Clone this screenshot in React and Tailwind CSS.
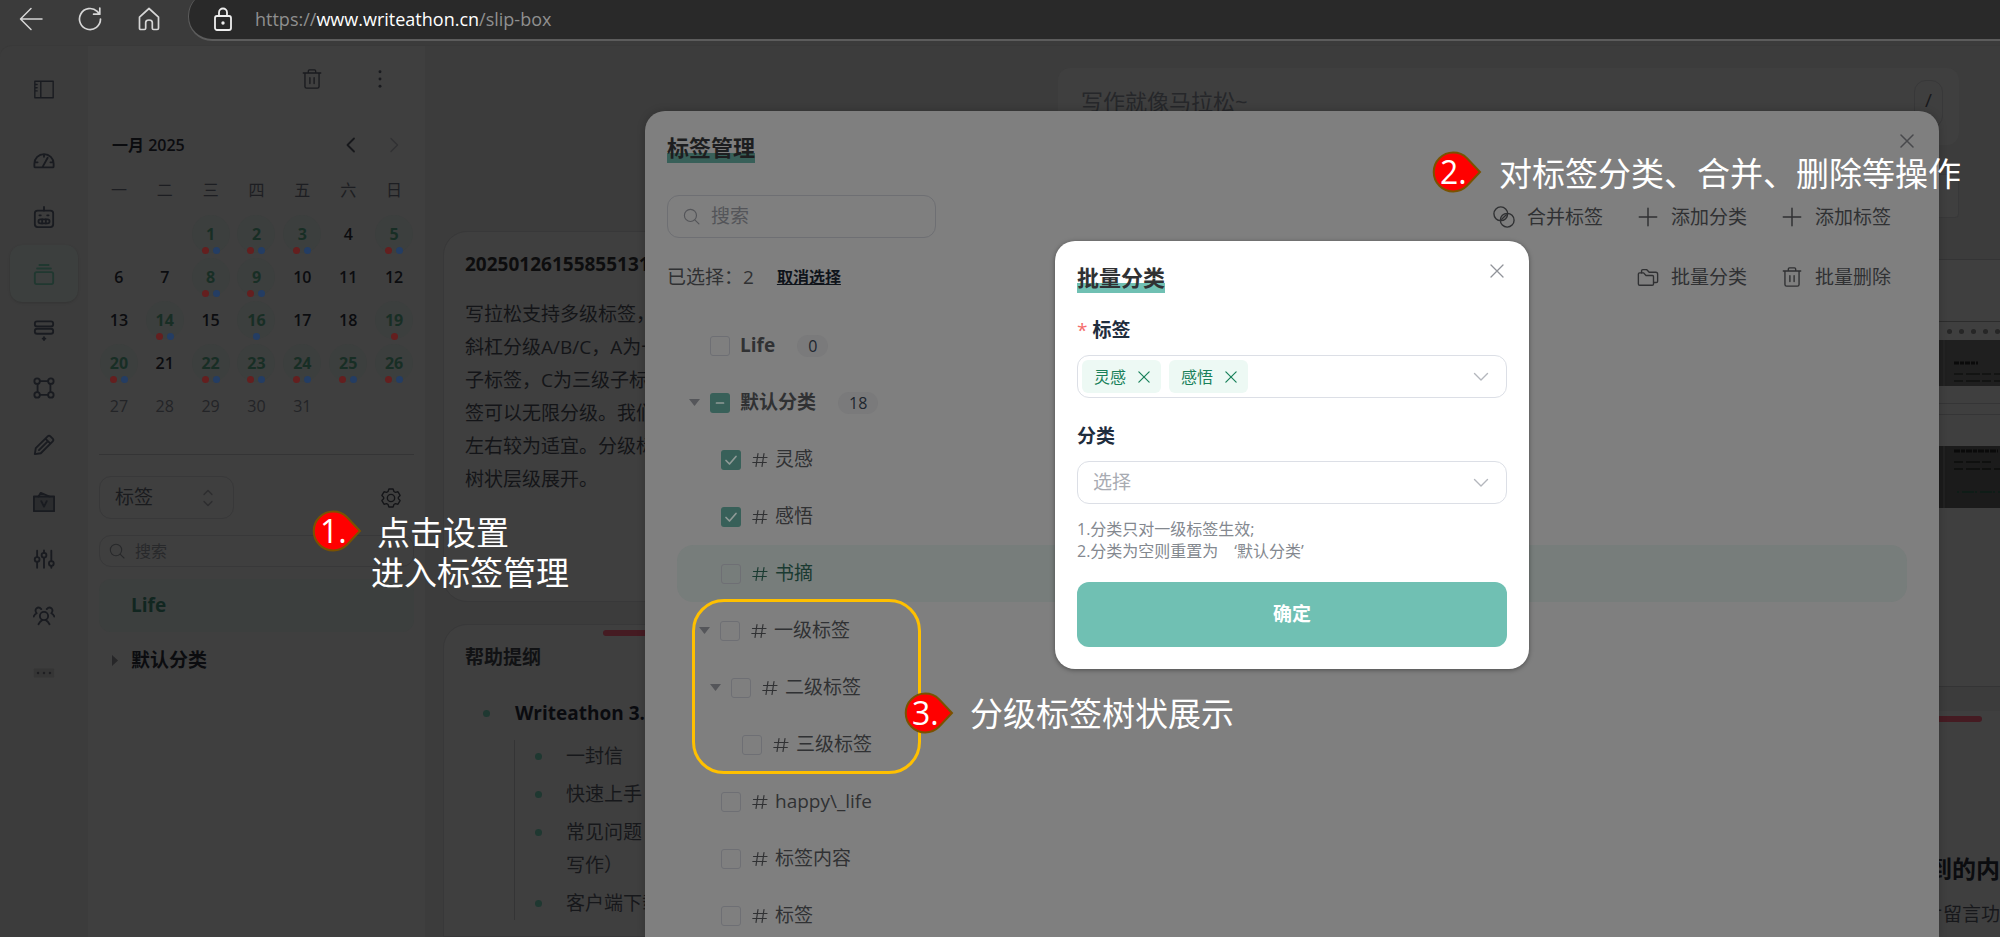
import React from "react";

function Svg({ size = 22, w = 1.5, children, className = "", vb = "0 0 24 24" }) {
  return (
    <svg
      width={size}
      height={size}
      viewBox={vb}
      fill="none"
      stroke="currentColor"
      strokeWidth={w}
      strokeLinecap="round"
      strokeLinejoin="round"
      className={"shrink-0 " + className}
      aria-hidden="true"
    >
      {children}
    </svg>
  );
}

const Trash = ({ size = 22 }) => (
  <Svg size={size}>
    <path d="M2.5 5.5h19M8 5.5V3.2q0-1.2 1.2-1.2h5.6q1.2 0 1.2 1.2v2.3M4.3 5.5v14.7q0 1.8 1.8 1.8h11.8q1.8 0 1.8-1.8V5.5M9.7 10.5v6.5M14.3 10.5v6.5" />
  </Svg>
);
const Close = ({ size = 14, w = 1.5 }) => (
  <Svg size={size} w={w} vb="0 0 14 14">
    <path d="M1 1l12 12M13 1L1 13" />
  </Svg>
);
const Search = ({ size = 17 }) => (
  <Svg size={size} w={1.6}>
    <circle cx="10.5" cy="10.5" r="8.5" />
    <path d="M17 17l5.5 5.5" />
  </Svg>
);
const Down = ({ className = "" }) => (
  <Svg size={16} w={1.4} vb="0 0 16 16" className={className}>
    <path d="M1.5 4.5L8 11l6.5-6.5" />
  </Svg>
);
const Plus = () => (
  <Svg size={22} w={1.6}>
    <path d="M12 2.5v19M2.5 12h19" />
  </Svg>
);
const Merge = () => (
  <Svg size={22}>
    <circle cx="8.5" cy="8.5" r="7.5" />
    <circle cx="15.5" cy="15.5" r="7.5" />
    <path d="M9.5 14.5l5-5" />
  </Svg>
);
const Folders = () => (
  <Svg size={22}>
    <path d="M1.5 19.5V8.8q0-1.3 1.3-1.3h4.4l2.6 2.8h7q1.2 0 1.2 1.2v8q0 1.5-1.5 1.5H3q-1.5 0-1.5-1.5z" />
    <path d="M5 7.5V5.3Q5 4 6.3 4h4.4l2.6 2.8h7.2q2 0 2 2v7.7q0 1.5-1.5 1.5h-2.5" />
  </Svg>
);

const navIcons = [
  {
    name: "仪表盘",
    art: (
      <Svg w={2}>
        <path d="M1.5 19v-3a10.5 10.5 0 0 1 21 0v3q0 1-1 1h-19q-1 0-1-1zM12 6v2.5M2 14.5h3M22 14.5h-3M10.5 19.5L16 9.5" />
      </Svg>
    ),
  },
  {
    name: "助手",
    art: (
      <Svg w={2}>
        <rect x="2" y="5" width="20" height="18" rx="3" />
        <path d="M12 1v4M7 10.2h1.5M15.5 10.2H17" />
        <rect x="6" y="14.5" width="12" height="4.5" rx="2" />
        <path d="M10 14.5V19M14 14.5V19" />
      </Svg>
    ),
  },
  {
    name: "卡片盒",
    active: true,
    art: (
      <Svg w={2}>
        <rect x="2" y="10" width="20" height="13" rx="2" />
        <path d="M4.5 6h15M7 2.2h10" />
      </Svg>
    ),
  },
  {
    name: "列表",
    art: (
      <Svg w={2}>
        <rect x="2" y="1.5" width="20" height="5.5" rx="2.5" />
        <rect x="2" y="9.5" width="20" height="5.5" rx="2.5" />
        <path d="M12 18.8v3M10.5 20.3h3" />
      </Svg>
    ),
  },
  {
    name: "白板",
    art: (
      <Svg w={2}>
        <circle cx="4.5" cy="4.5" r="3" />
        <circle cx="19.5" cy="4.5" r="3" />
        <circle cx="4.5" cy="19.5" r="3" />
        <circle cx="19.5" cy="19.5" r="3" />
        <path d="M7.5 4.5h9M7.5 19.5h9M5 7.5v9M19 7.5v9" />
      </Svg>
    ),
  },
  {
    name: "写作",
    art: (
      <Svg w={2}>
        <path d="M2 22l1-6.5L16 2.5q1.5-1.5 3 0l2.5 2.5q1.5 1.5 0 3L8.5 21zM13.5 5l5.5 5.5M6.5 17.5l9-9" />
      </Svg>
    ),
  },
  {
    name: "素材",
    art: (
      <Svg w={2}>
        <rect x="1" y="6" width="22" height="16" fill="#2b2c2e" />
        <path d="M6 6l2.5-4L18 6M9 11l3 6 3-6" />
      </Svg>
    ),
  },
  {
    name: "设置",
    art: (
      <Svg w={2}>
        <path d="M4.5 3v6.5M4.5 15v6.5M12 2.5v3M12 11v10.5M20 3v11.5M20 20v1.5" />
        <circle cx="4.5" cy="12.5" r="2.6" />
        <circle cx="12" cy="8" r="2.6" />
        <circle cx="20" cy="17" r="2.6" />
      </Svg>
    ),
  },
  {
    name: "团队",
    art: (
      <Svg w={2}>
        <circle cx="12" cy="12" r="4.5" />
        <path d="M6 21q1.5-3 4-4.5M18 21q-1.5-3-4-4.5M9 4.5Q6.5 1.5 4 3.5q-2.5 2.5 0 5.5-2 1-3.3 3.5M15 4.5q2.5-3 5-1 2.5 2.5 0 5.5 2 1 3.3 3.5" />
      </Svg>
    ),
  },
  {
    name: "更多",
    art: (
      <Svg w={1}>
        <rect x="1" y="7" width="22" height="10" rx="1" fill="#353535" stroke="none" />
        <g fill="#1f1f22" stroke="none">
          <circle cx="5.5" cy="12" r="1.3" />
          <circle cx="12" cy="12" r="1.3" />
          <circle cx="18.5" cy="12" r="1.3" />
        </g>
      </Svg>
    ),
  },
];

function BrowserBar() {
  return (
    <header className="flex h-[45px] shrink-0 items-start bg-[#3b3b3b] text-[#d6d6d6]">
      <div className="flex h-[38px] items-center gap-[35px] pr-[27px] pl-[19px]">
        <button type="button" aria-label="后退">
          <Svg size={24}>
            <path d="M23 12H2M12 1.5L1.5 12 12 22.5" />
          </Svg>
        </button>
        <button type="button" aria-label="刷新">
          <Svg size={24} w={1.7}>
            <path d="M22.5 12a10.5 10.5 0 1 1-3.3-7.6L21.5 7M21.8 1v6.2h-6.2" />
          </Svg>
        </button>
        <button type="button" aria-label="主页">
          <Svg size={24} w={1.7}>
            <path d="M2.5 10.2L12 1.5l9.5 8.7v11q0 1.3-1.3 1.3h-3.6q-1.3 0-1.3-1.3v-5.7q0-2.5-3.3-2.5t-3.3 2.5v5.7q0 1.3-1.3 1.3H3.8q-1.3 0-1.3-1.3z" />
          </Svg>
        </button>
      </div>
      <div className="-mt-2 flex h-[49px] flex-1 items-center gap-5 rounded-l-3xl border-b-2 border-l border-[#5c5c5c] bg-[#292929] pt-[7px] pl-[22px]">
        <Svg size={24} w={1.8} className="text-[#eeeeee]">
          <rect x="4" y="9" width="16" height="14" rx="2" />
          <path d="M8 9V5.5a4 4 0 0 1 8 0V9" />
          <circle cx="12" cy="16" r="0.8" fill="currentColor" />
        </Svg>
        <p className="text-[18px] whitespace-nowrap text-[#8f8f8f]">
          https://<span className="font-medium text-white">www.writeathon.cn</span>/slip-box
        </p>
      </div>
    </header>
  );
}

function SideNav() {
  return (
    <nav className="flex w-[88px] shrink-0 flex-col items-center bg-[#3c3c3c] text-[#191b20]">
      <button type="button" aria-label="侧栏" className="mt-[33px] mb-[30px] h-[22px]">
        <Svg size={22} w={1.5}>
          <path d="M2 2.5h20v18H2zM8.5 2.5v18M2 6h2.5M2 9.5h2.5M2 13h2.5" />
        </Svg>
      </button>
      {navIcons.map((it) => (
        <button
          key={it.name}
          type="button"
          aria-label={it.name}
          className={
            it.active
              ? "flex h-[57px] w-[68px] items-center justify-center rounded-xl bg-[#3c3f3e] text-[#203830] shadow-sm"
              : "flex h-[57px] w-[68px] items-center justify-center"
          }
        >
          {it.art}
        </button>
      ))}
    </nav>
  );
}

const RB = "rb";
const marks = {
  1: RB, 2: RB, 3: RB, 5: RB, 8: RB, 9: RB, 14: RB, 16: "b", 19: "r",
  20: RB, 22: RB, 23: RB, 24: RB, 25: RB, 26: RB,
};

function Day({ n }) {
  const m = marks[n];
  return (
    <div className="relative flex h-[43px] items-center justify-center text-[16px]">
      <button
        type="button"
        className={
          m
            ? "h-[38px] w-[38px] rounded-full bg-[#3c3f3e] font-bold text-[#182e25]"
            : n > 26
              ? "h-[38px] w-[38px] text-[#232427]"
              : "h-[38px] w-[38px] font-semibold text-[#0b0c0f]"
        }
      >
        {n}
      </button>
      {m && (
        <span className="absolute inset-x-0 bottom-px flex justify-center gap-1">
          {m.includes("r") && <i className="size-[7px] rounded-full bg-[#641f1f]" />}
          {m.includes("b") && <i className="size-[7px] rounded-full bg-[#243d63]" />}
        </span>
      )}
    </div>
  );
}

function Calendar() {
  return (
    <section className="px-2">
      <div className="flex h-6 items-center pr-[15px] pl-4 text-[16px]">
        <h2 className="flex-1 font-semibold text-[#0b0c0f]">一月 2025</h2>
        <button type="button" aria-label="上个月" className="mr-[27px] text-[#17181b]">
          <Svg size={16} w={1.8} vb="0 0 16 16"><path d="M11 1.5L4.5 8l6.5 6.5" /></Svg>
        </button>
        <button type="button" aria-label="下个月" className="text-[#323234]">
          <Svg size={16} w={1.5} vb="0 0 16 16"><path d="M5 1.5L11.5 8 5 14.5" /></Svg>
        </button>
      </div>
      <div className="mt-[21px] grid grid-cols-7 text-center text-[16px] leading-[24px] text-[#1d1e22]">
        {["一", "二", "三", "四", "五", "六", "日"].map((d) => (
          <span key={d}>{d}</span>
        ))}
      </div>
      <div className="mt-[10px] grid grid-cols-7">
        <span />
        <span />
        {Array.from({ length: 31 }, (_, i) => (
          <Day key={i} n={i + 1} />
        ))}
      </div>
    </section>
  );
}

function MiddlePanel() {
  return (
    <aside className="flex w-[337px] shrink-0 flex-col bg-[#3f3f3f]">
      <div className="mt-[21px] flex h-6 items-center justify-end gap-[46px] pr-[34px] text-[#1a1b1f]">
        <button type="button" aria-label="回收站"><Trash /></button>
        <button type="button" aria-label="更多操作">
          <Svg size={22}>
            <g fill="currentColor" stroke="none">
              <circle cx="12" cy="4" r="1.6" />
              <circle cx="12" cy="12" r="1.6" />
              <circle cx="12" cy="20" r="1.6" />
            </g>
          </Svg>
        </button>
      </div>
      <div className="mt-[42px]"><Calendar /></div>
      <div className="mr-[11px] ml-[11px] mt-[27px] border-t border-[#343435] pt-[21px]">
        <div className="flex items-center justify-between pr-[12px]">
          <div className="grid h-[43px] w-[135px] items-center rounded-xl border border-[#383839]">
            <select
              aria-label="视图"
              className="col-start-1 row-start-1 h-full w-full appearance-none pl-[15px] text-[19px] text-[#1a1b1e] outline-none"
            >
              <option>标签</option>
            </select>
            <Svg size={18} w={1.2} vb="0 0 18 18" className="pointer-events-none col-start-1 row-start-1 mr-4 justify-self-end text-[#2c2c2e]">
              <path d="M5 5.5L9 1.5l4 4M5 12.5l4 4 4-4" />
            </Svg>
          </div>
          <button type="button" aria-label="标签设置" className="text-[#141518]">
            <Svg size={22}>
              <path d="M9.7 2.2h4.6l.9 2.7 1.6.9 2.800-.6 2.300 4-1.900 2.100v1.400l1.900 2.100-2.300 4-2.800-.6-1.600.9-.9 2.700H9.700l-.9-2.700-1.600-.9-2.800.6-2.300-4L4 12.700v-1.400L2.100 9.200l2.300-4 2.800.6 1.600-.9z" />
              <circle cx="12" cy="12" r="4" />
            </Svg>
          </button>
        </div>
        <label className="mt-4 flex h-8 items-center gap-2 rounded-xl border border-[#383839] px-[9px] text-[#28292b]">
          <Search size={16} />
          <input
            type="text"
            placeholder="搜索"
            aria-label="搜索标签"
            className="min-w-0 flex-1 bg-transparent pl-[2px] text-[16px] outline-none placeholder:text-[#28292b]"
          />
        </label>
        <ul className="mt-3 text-[19px] font-bold">
          <li className="flex h-[53px] items-center rounded-xl bg-[#3c3f3e] pl-8 text-[#112620]">Life</li>
          <li className="flex h-[57px] items-center gap-[13px] pl-[13px] text-[#0b0c0f]">
            <svg width="6" height="11" viewBox="0 0 6 11" fill="#262628" aria-hidden="true"><path d="M0 0l6 5.5L0 11z" /></svg>
            默认分类
          </li>
        </ul>
      </div>
    </aside>
  );
}

const cardLines = ["写拉松支持多级标签，", "斜杠分级A/B/C，A为一", "子标签，C为三级子标签", "签可以无限分级。我们", "左右较为适宜。分级标签", "树状层级展开。"];

function Bullet() {
  return <i className="size-[7px] shrink-0 rounded-full bg-[#1f3831]" />;
}

function ShotHeader() {
  return (
    <div className="flex w-full justify-end bg-[#1f1f1f]">
      <svg width="61" height="46" viewBox="0 0 61 46" aria-hidden="true">
        <path d="M5 0v46" stroke="#292929" />
        <path d="M15 23h24" stroke="#0a0a0a" strokeWidth="3" strokeDasharray="5 1 4 1" />
        <path d="M15 34h46M15 41h46" stroke="#131413" strokeWidth="2" strokeDasharray="9 3 14 2" />
      </svg>
    </div>
  );
}

function ShotBody() {
  return (
    <div className="flex w-full justify-end bg-[#1b1b1b]">
      <svg width="61" height="62" viewBox="0 0 61 62" aria-hidden="true">
        <path d="M5 0v62" stroke="#292929" />
        <path d="M15 5h44" stroke="#0a0a0a" strokeWidth="3" strokeDasharray="6 1 4 1" />
        <path d="M15 16h40M15 23h46" stroke="#0f100f" strokeWidth="2" strokeDasharray="9 3 14 2" />
        <path d="M18 46h43" stroke="#0f1c17" strokeWidth="2" strokeDasharray="2 3 12 1" />
      </svg>
    </div>
  );
}

function Content() {
  return (
    <main className="flex min-w-0 flex-1 flex-col bg-[#3c3c3c] pt-[22px]">
      <div className="mr-[41px] ml-auto flex h-[77px] w-[901px] shrink-0 items-start justify-between rounded-xl bg-[#3f3f3f] px-4 pt-4">
        <p className="pl-[7px] text-[22px] leading-[34px] text-[#26272a]">写作就像马拉松~</p>
        <kbd className="-mt-1 flex h-12 w-[29px] items-center justify-center rounded-xl border border-[#383839] pb-2 font-['Open_Sans'] text-[19px] text-[#17181b]">/</kbd>
      </div>
      <div className="mt-[29px] mr-[41px] ml-auto h-11 w-[901px] shrink-0 rounded border border-[#383839] bg-[#3f3f3f]" />
      <div className="mt-[13px] grid min-h-0 flex-1 grid-cols-2 gap-4 pl-[18px]">
        <div className="flex min-w-0 flex-col gap-[22px]">
          <article className="h-[371px] shrink-0 rounded-3xl border border-[#383839] bg-[#3f3f3f] px-[21px] pt-[16px] text-[19px] text-[#141518]">
            <h3 className="leading-[32px] font-bold text-[#0d0d0e]">20250126155855131</h3>
            <div className="mt-[18px] leading-[33px]">
              {cardLines.map((l) => (
                <p key={l} className="whitespace-nowrap">{l}</p>
              ))}
            </div>
          </article>
          <article className="flex-1 rounded-t-3xl border border-[#383839] bg-[#3f3f3f] px-[21px] pt-[5px] text-[19px] text-[#17181b]">
            <div className="mx-auto h-[6px] w-[450px] rounded-full bg-[#451b22]" />
            <h3 className="mt-[5px] leading-[32px] font-bold text-[#111214]">帮助提纲</h3>
            <div className="mt-[24px] flex items-center gap-[25px] pl-[18px]">
              <Bullet />
              <strong className="leading-[32px] text-[#0a0b0f]">Writeathon 3.0</strong>
            </div>
            <ul className="mt-[11px] ml-[49px] flex flex-col gap-[5px] border-l border-[#343435] pl-[20px]">
              {[["一封信"], ["快速上手"], ["常见问题", "写作）"], ["客户端下载"]].map((g) => (
                <li key={g[0]} className="flex gap-[24px] leading-[33px]">
                  <span className="flex h-[33px] items-center"><Bullet /></span>
                  <span>{g.map((t) => <span key={t} className="block">{t}</span>)}</span>
                </li>
              ))}
            </ul>
          </article>
        </div>
        <div className="mt-[28px] flex min-w-0 flex-col gap-[24px]">
          <article className="flex h-[428px] shrink-0 flex-col items-end border-y border-[#343435] bg-[#3f3f3f]">
            <div className="mt-[61px] flex h-[19px] w-full items-center justify-end gap-[7px] border-t border-[#2c2c2c]">
              {[0, 1, 2, 3, 4].map((i) => (
                <i key={i} className="size-[5px] rounded-sm bg-[#262626]" />
              ))}
            </div>
            <ShotHeader />
            <div className="mt-[17px] mb-[31px] h-[12px] w-full border-y border-[#353536]" />
            <ShotBody />
          </article>
          <article className="flex flex-1 flex-col bg-[#3f3f3f] pt-[5px] text-right whitespace-nowrap">
            <div className="mr-[18px] h-[6px] w-[460px] self-end rounded-full bg-[#451b22]" />
            <h3 className="mt-[129px] text-[24px] leading-[36px] font-bold text-[#0b0c0f]">收到的内</h3>
            <p className="mt-[11px] text-[19px] leading-[32px] text-[#17181b]">卡片留言功</p>
          </article>
        </div>
      </div>
    </main>
  );
}

function Check({ label, state }) {
  const on = state === "on" || state === "mixed";
  return (
    <span className="grid size-5 shrink-0 place-items-center">
      <input
        type="checkbox"
        aria-label={label}
        defaultChecked={on}
        ref={(el) => { if (el) el.indeterminate = state === "mixed"; }}
        className={
          on
            ? "col-start-1 row-start-1 size-5 appearance-none rounded-[3px] bg-[#386059]"
            : "col-start-1 row-start-1 size-5 appearance-none rounded-[3px] border border-[#6e6f74]"
        }
      />
      {on && (
        <Svg size={14} w={1.7} vb="0 0 14 14" className="pointer-events-none col-start-1 row-start-1 text-[#8f9a97]">
          <path d={state === "mixed" ? "M3.5 7h7" : "M2 7.5l3.5 3.5L12 3.5"} />
        </Svg>
      )}
    </span>
  );
}

const tree = [
  { t: "灵感", s: "on", pad: "pl-[44px]" },
  { t: "感悟", s: "on", pad: "pl-[44px]" },
  { t: "书摘", pad: "pl-[44px]", hot: true },
  { t: "一级标签", pad: "pl-[22px]", open: true },
  { t: "二级标签", pad: "pl-[33px]", open: true },
  { t: "三级标签", pad: "pl-[65px]" },
  { t: "happy\\_life", pad: "pl-[44px]" },
  { t: "标签内容", pad: "pl-[44px]" },
  { t: "标签", pad: "pl-[44px]" },
];

const Caret = () => (
  <svg width="11" height="7" viewBox="0 0 11 7" fill="#55565a" aria-hidden="true"><path d="M0 0h11L5.5 7z" /></svg>
);

function Tool({ icon, children }) {
  return (
    <button type="button" className="flex items-center gap-3 text-[19px] leading-[28px] whitespace-nowrap">
      {icon}
      {children}
    </button>
  );
}

function TagManager() {
  return (
    <section
      role="dialog"
      aria-labelledby="manager-title"
      className="flex min-w-0 flex-1 flex-col rounded-t-[20px] bg-[#7f7f7f] px-[22px] pt-[20px] text-[#303133] shadow-[0_0_8px_rgba(0,0,0,0.2)]"
    >
      <div className="flex items-start justify-between">
        <h2
          id="manager-title"
          className="bg-[linear-gradient(transparent_22px,#386059_22px)] text-[22px] leading-[32px] font-bold text-[#1d1e20]"
        >
          标签管理
        </h2>
        <button type="button" aria-label="关闭" className="mt-[3px] mr-[3px] text-[#48494c]"><Close /></button>
      </div>
      <div className="mt-[32px] flex items-center justify-between">
        <label className="flex h-[43px] w-[269px] items-center gap-[11px] rounded-xl border border-[#6e6f73] px-[15px] text-[#545559]">
          <Search />
          <input
            type="text"
            placeholder="搜索"
            aria-label="搜索"
            className="min-w-0 flex-1 bg-transparent text-[19px] outline-none placeholder:text-[#545559]"
          />
        </label>
        <div className="flex gap-[34px] pr-[26px]">
          <Tool icon={<Merge />}>合并标签</Tool>
          <Tool icon={<Plus />}>添加分类</Tool>
          <Tool icon={<Plus />}>添加标签</Tool>
        </div>
      </div>
      <div className="mt-[23px] flex items-center justify-between">
        <p className="flex items-center text-[19px] leading-[32px]">
          已选择：2
          <a href="#clear" className="ml-[23px] text-[16px] font-bold text-[#0f141b] underline">取消选择</a>
        </p>
        <div className="flex gap-[34px] pr-[26px]">
          <Tool icon={<Folders />}>批量分类</Tool>
          <Tool icon={<Trash />}>批量删除</Tool>
        </div>
      </div>
      <ul className="mt-[24px] mr-[10px] ml-[10px] text-[19px] text-[#303133]">
        <li className="flex h-[57px] items-center pl-[33px]">
          <Check label="Life" />
          <span className="ml-[10px] font-bold">Life</span>
          <span className="ml-[22px] rounded-full bg-[#7a7a7b] px-[11px] text-[16px] leading-[22px] text-[#20262f]">0</span>
        </li>
        <li className="flex h-[57px] items-center pl-[12px]">
          <button type="button" aria-label="折叠 默认分类" className="mr-[10px]"><Caret /></button>
          <Check label="默认分类" state="mixed" />
          <span className="ml-[10px] font-bold">默认分类</span>
          <span className="ml-[22px] rounded-full bg-[#7a7a7b] px-[11px] text-[16px] leading-[22px] text-[#20262f]">18</span>
        </li>
        {tree.map((r) => (
          <li
            key={r.t}
            className={
              "flex h-[57px] items-center " + r.pad + (r.hot ? " rounded-2xl bg-[#777d7b] text-[#1a3a31]" : "")
            }
          >
            {r.open && (
              <button type="button" aria-label={"折叠 " + r.t} className="mr-[10px]"><Caret /></button>
            )}
            <Check label={r.t} state={r.s} />
            <Svg size={16} w={1.2} vb="0 0 16 16" className="ml-[11px]">
              <path d="M6 1.5L4 14.5M12 1.5l-2 13M1.5 5.5h13.5M.8 10.5h13.5" />
            </Svg>
            <span className="ml-[7px]">{r.t}</span>
          </li>
        ))}
      </ul>
    </section>
  );
}

function Tag({ children }) {
  return (
    <span className="flex h-[33px] items-center gap-3 rounded-md bg-[#edf9f4] pr-[11px] pl-[12px] text-[16px] text-[#18805a]">
      {children}
      <button type="button" aria-label={"移除 " + children}><Close size={12} w={1.4} /></button>
    </span>
  );
}

function BatchDialog() {
  return (
    <section
      role="dialog"
      aria-labelledby="batch-title"
      className="w-[474px] rounded-[20px] bg-white px-[22px] pt-[20px] pb-[22px] shadow-[0_1px_5px_rgba(0,0,0,0.4)]"
    >
      <div className="flex items-start justify-between">
        <h2
          id="batch-title"
          className="bg-[linear-gradient(transparent_22px,#70c0b3_22px)] text-[22px] leading-[32px] font-bold text-[#303133]"
        >
          批量分类
        </h2>
        <button type="button" aria-label="关闭" className="mt-[3px] mr-[3px] text-[#909399]"><Close w={1.3} /></button>
      </div>
      <p id="tag-label" className="mt-[21px] flex gap-[5px] text-[19px] leading-[32px] font-bold text-[#1f2d3d]">
        <span className="font-normal text-[#f56c6c]">*</span>标签
      </p>
      <div
        role="group"
        aria-labelledby="tag-label"
        className="mt-[9px] flex h-[43px] items-center gap-2 rounded-xl border border-[#dcdfe6] pr-[17px] pl-1"
      >
        <Tag>灵感</Tag>
        <Tag>感悟</Tag>
        <button type="button" aria-label="展开标签" className="ml-auto text-[#b4b7bd]"><Down /></button>
      </div>
      <label htmlFor="category" className="mt-[22px] block text-[19px] leading-[32px] font-bold text-[#1f2d3d]">分类</label>
      <div className="mt-[9px] grid h-[43px] items-center rounded-xl border border-[#dcdfe6]">
        <select
          id="category"
          className="col-start-1 row-start-1 h-full w-full appearance-none pl-[15px] text-[19px] text-[#a8abb2] outline-none"
        >
          <option>选择</option>
        </select>
        <Down className="pointer-events-none col-start-1 row-start-1 mr-[17px] justify-self-end text-[#b4b7bd]" />
      </div>
      <p className="mt-[14px] text-[16px] leading-[22px] text-[#83888f]">
        1.分类只对一级标签生效;
        <br />
        2.分类为空则重置为<span className="ml-4">‘默认分类’</span>
      </p>
      <button type="button" className="mt-[20px] h-[65px] w-full rounded-xl bg-[#70c0b3] text-[19px] font-bold text-white">
        确定
      </button>
    </section>
  );
}

function Pin({ n, className }) {
  return (
    <div className={"absolute flex h-[42px] w-[50px] items-center " + className}>
      <svg className="absolute inset-0" width="50" height="42" viewBox="0 0 50 42" aria-hidden="true">
        <path d="M35 7.2L48 21 35 34.8A19.5 19.5 0 1 1 35 7.2z" fill="#ff0000" stroke="#7a5200" strokeWidth="2" />
      </svg>
      <span className="relative pl-[8px] text-[32px] leading-[40px] text-white">{n}.</span>
    </div>
  );
}

export default function App() {
  return (
    <div className="relative flex h-screen flex-col overflow-hidden bg-[#3b3b3b] font-['Open_Sans','Noto_Sans_CJK_SC',sans-serif]">
      <BrowserBar />
      <div className="flex min-h-0 flex-1 overflow-hidden rounded-tl-xl border-t border-[#393939]">
        <SideNav />
        <MiddlePanel />
        <Content />
      </div>

      <div className="absolute inset-0 flex pt-[111px] pr-[61px] pl-[645px]">
        <TagManager />
      </div>
      <div className="absolute inset-0 flex items-start justify-center pt-[241px] pr-[61px] pl-[645px]">
        <BatchDialog />
      </div>

      <div className="pointer-events-none absolute top-[599px] left-[692px] h-[175px] w-[229px] rounded-[32px] border-3 border-[#ffc000]" />
      <Pin n={1} className="top-[510px] left-[312px]" />
      <Pin n={2} className="top-[151px] left-[1432px]" />
      <Pin n={3} className="top-[692px] left-[904px]" />
      <p className="absolute top-[513px] left-[371px] text-[33px] leading-[40px] whitespace-nowrap text-white">
        <span className="ml-1.5 block">点击设置</span>
        进入标签管理
      </p>
      <p className="absolute top-[154px] left-[1499px] text-[33px] leading-[40px] whitespace-nowrap text-white">
        对标签分类、合并、删除等操作
      </p>
      <p className="absolute top-[694px] left-[970px] text-[33px] leading-[40px] whitespace-nowrap text-white">分级标签树状展示</p>
    </div>
  );
}
